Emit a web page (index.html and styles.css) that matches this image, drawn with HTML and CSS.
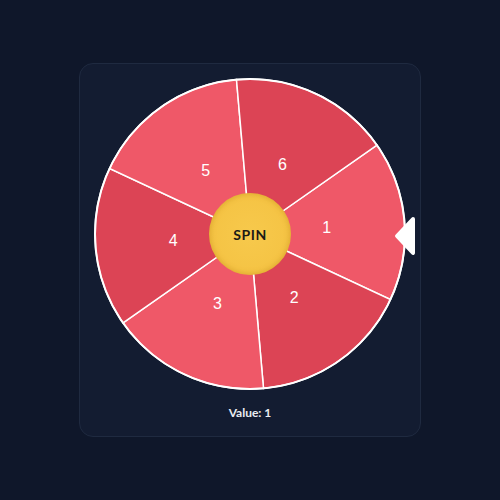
FILE: index.html
```html
<!DOCTYPE html>
<html>
<head>
<meta charset="utf-8">
<link rel="stylesheet" href="styles.css">
</head>
<body>
<div class="card">
  <div class="wheel-wrap">
    <svg class="wheel" width="312" height="312" viewBox="0 0 312 312">
      <path class="seg light" d="M156,156 L282.97,67.10 A155,155 0 0 1 296.48,221.51 Z"/>
      <path class="seg dark" d="M156,156 L296.48,221.51 A155,155 0 0 1 169.51,310.41 Z"/>
      <path class="seg light" d="M156,156 L169.51,310.41 A155,155 0 0 1 29.03,244.90 Z"/>
      <path class="seg dark" d="M156,156 L29.03,244.90 A155,155 0 0 1 15.52,90.49 Z"/>
      <path class="seg light" d="M156,156 L15.52,90.49 A155,155 0 0 1 142.49,1.59 Z"/>
      <path class="seg dark" d="M156,156 L142.49,1.59 A155,155 0 0 1 282.97,67.10 Z"/>
      <circle cx="156" cy="156" r="155" fill="none" stroke="#ffffff" stroke-width="2"/>
      <text class="num" x="232.7" y="149.3">1</text>
      <text class="num" x="200.2" y="219.1">2</text>
      <text class="num" x="123.5" y="225.8">3</text>
      <text class="num" x="79.3" y="162.7">4</text>
      <text class="num" x="111.8" y="92.9">5</text>
      <text class="num" x="188.5" y="86.2">6</text>
    </svg>
    <button class="spin">SPIN</button>
    <svg class="pointer" width="24" height="40" viewBox="0 0 24 40">
      <path d="M19,3 L3,20 L19,37 Z" fill="#ffffff" stroke="#ffffff" stroke-width="4" stroke-linejoin="round"/>
    </svg>
  </div>
  <div class="value">Value: 1</div>
</div>
</body>
</html>
```
FILE: styles.css
```css
html, body {
  margin: 0;
  padding: 0;
}
body {
  width: 500px;
  height: 500px;
  background: #0f172a;
  display: flex;
  align-items: center;
  justify-content: center;
  font-family: Lato, "Liberation Sans", sans-serif;
}
.card {
  box-sizing: border-box;
  width: 342px;
  height: 374px;
  background: #131c31;
  border: 1px solid #1f2a40;
  border-radius: 14px;
  padding: 14px 0 0;
  display: flex;
  flex-direction: column;
  align-items: center;
}
.wheel-wrap {
  position: relative;
  width: 312px;
  height: 312px;
}
.wheel {
  display: block;
}
.seg {
  stroke: #ffffff;
  stroke-width: 1.5;
}
.seg.light { fill: #ef5868; }
.seg.dark { fill: #dc4455; }
.num {
  fill: #ffffff;
  font-family: "Liberation Sans", Arial, sans-serif;
  font-size: 16px;
  text-anchor: middle;
  dominant-baseline: central;
}
.spin {
  position: absolute;
  left: 115px;
  top: 115px;
  width: 82px;
  height: 82px;
  border: none;
  border-radius: 50%;
  background: radial-gradient(circle at 50% 50%, #f7c94c 0%, #f5c445 62%, #e4ae32 100%);
  box-shadow: inset 0 0 6px rgba(190, 130, 20, 0.45);
  color: #1c1a17;
  font-family: Lato, "Liberation Sans", sans-serif;
  font-weight: 700;
  font-size: 14px;
  letter-spacing: 0.6px;
  padding: 0;
  cursor: pointer;
}
.pointer {
  position: absolute;
  left: 300px;
  top: 138px;
}
.value {
  margin-top: 15px;
  color: #e9ecf2;
  font-weight: 700;
  font-size: 12px;
  line-height: 16px;
}
```
